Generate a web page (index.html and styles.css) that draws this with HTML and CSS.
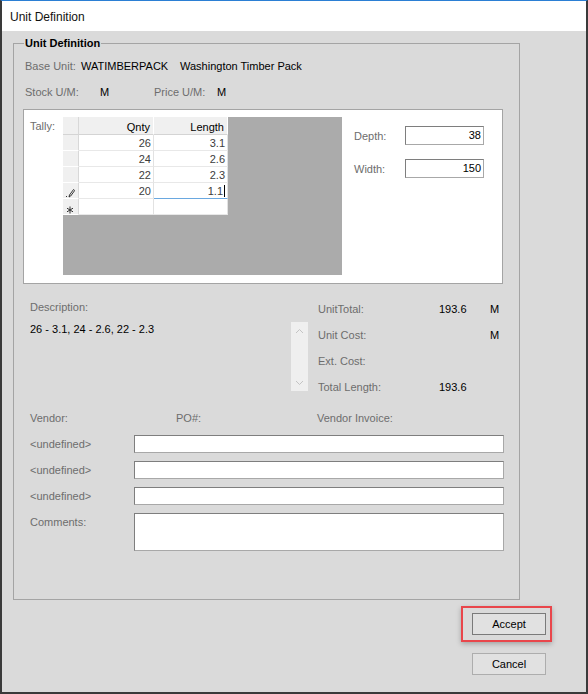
FILE: index.html
```html
<!DOCTYPE html>
<html lang="en">
<head>
    <meta charset="UTF-8">
    <title>Unit Definition</title>
    <link rel="stylesheet" href="styles.css">
</head>
<body>
    <div class="window">
        <div class="titlebar">Unit Definition</div>

        <div class="dialog">
            <!-- Group box -->
            <div class="group">
                <div class="legend">Unit Definition</div>

                <div class="info-row">
                    <span class="lbl w-base">Base Unit:</span>
                    <span class="val w-code">WATIMBERPACK</span>
                    <span class="val">Washington Timber Pack</span>
                </div>
                <div class="info-row stock-row">
                    <span class="lbl w-stock">Stock U/M:</span>
                    <span class="val w-m1">M</span>
                    <span class="lbl w-price">Price U/M:</span>
                    <span class="val">M</span>
                </div>

                <!-- Tally panel -->
                <div class="tally-panel">
                    <div class="lbl tally-label">Tally:</div>
                    <div class="grid-area">
                        <div class="tally-grid">
                            <div class="cell corner"></div>
                            <div class="cell head">Qnty</div>
                            <div class="cell head">Length</div>

                            <div class="cell rowhead"></div>
                            <div class="cell">26</div>
                            <div class="cell">3.1</div>

                            <div class="cell rowhead"></div>
                            <div class="cell">24</div>
                            <div class="cell">2.6</div>

                            <div class="cell rowhead"></div>
                            <div class="cell">22</div>
                            <div class="cell">2.3</div>

                            <div class="cell rowhead">
                                <svg width="9" height="10" viewBox="0 0 9 10">
                                    <rect x="0" y="8" width="1" height="1" fill="#333"/>
                                    <path d="M3 9 L3.5 7 L7.5 1.5 L8.7 2.5 L4.7 8 Z" fill="none" stroke="#222" stroke-width="0.9"/>
                                </svg>
                            </div>
                            <div class="cell">20</div>
                            <div class="cell editing"><span class="caret">1.1</span></div>

                            <div class="cell rowhead">
                                <svg width="8" height="8" viewBox="0 0 8 8">
                                    <path d="M4 0.5 V7.5 M1 2.2 L7 5.8 M1 5.8 L7 2.2" stroke="#333" stroke-width="1"/>
                                </svg>
                            </div>
                            <div class="cell"></div>
                            <div class="cell"></div>
                        </div>
                    </div>
                    <div class="dims">
                        <div class="dim-row">
                            <span class="lbl dim-label">Depth:</span>
                            <div class="textbox num">38</div>
                        </div>
                        <div class="dim-row">
                            <span class="lbl dim-label">Width:</span>
                            <div class="textbox num">150</div>
                        </div>
                    </div>
                </div>

                <!-- Description and totals -->
                <div class="summary">
                    <div class="desc">
                        <div class="lbl desc-label">Description:</div>
                        <div class="val desc-value">26 - 3.1, 24 - 2.6, 22 - 2.3</div>
                    </div>
                    <div class="scrollbar">
                        <svg width="9" height="6" viewBox="0 0 9 6"><path d="M1 5 L4.5 1.5 L8 5" fill="none" stroke="#c4c4c4" stroke-width="1"/></svg>
                        <svg width="9" height="6" viewBox="0 0 9 6"><path d="M1 1 L4.5 4.5 L8 1" fill="none" stroke="#c4c4c4" stroke-width="1"/></svg>
                    </div>
                    <div class="totals">
                        <span class="lbl">UnitTotal:</span><span class="val">193.6</span><span class="val">M</span>
                        <span class="lbl">Unit Cost:</span><span class="val"></span><span class="val">M</span>
                        <span class="lbl">Ext. Cost:</span><span class="val"></span><span class="val"></span>
                        <span class="lbl">Total Length:</span><span class="val">193.6</span><span class="val"></span>
                    </div>
                </div>

                <!-- Vendor -->
                <div class="vendor-head">
                    <span class="lbl w-vendor">Vendor:</span>
                    <span class="lbl w-po">PO#:</span>
                    <span class="lbl">Vendor Invoice:</span>
                </div>
                <div class="vendor-form">
                    <span class="lbl">&lt;undefined&gt;</span>
                    <div class="textbox"></div>
                    <span class="lbl">&lt;undefined&gt;</span>
                    <div class="textbox"></div>
                    <span class="lbl">&lt;undefined&gt;</span>
                    <div class="textbox"></div>
                    <span class="lbl">Comments:</span>
                    <div class="textbox"></div>
                </div>
            </div>

            <div class="actions">
                <div class="highlight">
                    <button class="btn btn-accept">Accept</button>
                </div>
                <button class="btn btn-cancel">Cancel</button>
            </div>
        </div>
    </div>
</body>
</html>
```

FILE: styles.css
```css
* {
    margin: 0;
    padding: 0;
    box-sizing: border-box;
}

body {
    font-family: 'Liberation Sans', Arial, sans-serif;
    font-size: 11px;
    color: #000;
    background: #dadada;
}

.window {
    width: 588px;
    height: 694px;
    background: #dadada;
    border: 2px solid #3a3a3a;
    border-top: 1px solid #2b7fd4;
}

.titlebar {
    height: 30px;
    background: #fff;
    font-size: 12px;
    line-height: 33px;
    padding-left: 8px;
    color: #111;
}

.dialog {
    padding-top: 12px;
}

.lbl {
    color: #6d6d6d;
}

.val {
    color: #000;
}

/* group box */
.group {
    margin-left: 11px;
    width: 507px;
    height: 557px;
    border: 1px solid #a4a4a4;
}

.legend {
    display: table;
    margin: -8px 0 0 10px;
    padding: 0 1px;
    background: #dadada;
    font-weight: bold;
    line-height: 14px;
}

.info-row {
    display: flex;
    line-height: 14px;
    padding-left: 11px;
    margin-top: 9px;
}

.stock-row {
    margin-top: 12px;
}

.w-base { width: 56px; }
.w-code { width: 99px; }
.w-stock { width: 75px; }
.w-m1 { width: 54px; }
.w-price { width: 63px; }

/* tally panel */
.tally-panel {
    display: flex;
    align-items: flex-start;
    margin: 10px 0 0 9px;
    width: 480px;
    height: 175px;
    background: #fff;
    border: 1px solid #a4a4a4;
    padding: 7px 0 0 6px;
}

.tally-label {
    width: 33px;
    line-height: 14px;
    margin-top: 2px;
}

.grid-area {
    width: 279px;
    height: 158px;
    background: #ababab;
}

.tally-grid {
    display: grid;
    grid-template-columns: 16px 75px 74px;
    grid-template-rows: 18px repeat(5, 16px);
    width: 165px;
    background: #fff;
}

.cell {
    text-align: right;
    padding-right: 2px;
    line-height: 16px;
    color: #3c3c3c;
    border-right: 1px solid #e2e2e2;
    border-bottom: 1px solid #e8e8e8;
}

.cell.head {
    background: #f0f0f0;
    color: #000;
    line-height: 20px;
    padding-right: 3px;
    border-right: 1px solid #fff;
    border-bottom: 1px solid #d4d4d4;
}

.cell.corner,
.cell.rowhead {
    background: #f0f0f0;
    border-right: 1px solid #d8d8d8;
    border-bottom: 1px solid #fff;
    text-align: left;
    padding: 3px 0 0 3px;
}

.cell.corner {
    border-bottom: 1px solid #d4d4d4;
}

.cell.editing {
    border-bottom: 1px solid #6aa8e0;
}

.caret {
    border-right: 1px solid #000;
    padding-right: 1px;
}

.dims {
    margin-left: 12px;
    padding-top: 9px;
    display: flex;
    flex-direction: column;
    gap: 14px;
}

.dim-row {
    display: flex;
    align-items: center;
}

.dim-label {
    width: 51px;
}

.textbox {
    background: #fff;
    border: 1px solid #7e7e7e;
    border-right-color: #a8a8a8;
    border-bottom-color: #a8a8a8;
}

.textbox.num {
    width: 79px;
    height: 19px;
    text-align: right;
    line-height: 17px;
    padding-right: 2px;
}

/* description / totals */
.summary {
    display: flex;
    margin-top: 12px;
    padding-left: 16px;
}

.desc {
    width: 261px;
}

.desc-label {
    line-height: 22px;
}

.desc-value {
    line-height: 22px;
}

.scrollbar {
    width: 17px;
    height: 69px;
    margin-top: 26px;
    background: #efefef;
    display: flex;
    flex-direction: column;
    justify-content: space-between;
    align-items: center;
    padding: 6px 0 5px;
}

.totals {
    display: grid;
    grid-template-columns: 121px 51px 20px;
    grid-auto-rows: 26px;
    line-height: 26px;
    margin-left: 10px;
}

/* vendor */
.vendor-head {
    display: flex;
    line-height: 18px;
    margin-top: 9px;
    padding-left: 16px;
}

.w-vendor { width: 146px; }
.w-po { width: 141px; }

.vendor-form {
    display: grid;
    grid-template-columns: 104px 370px;
    grid-template-rows: 18px 18px 18px 38px;
    row-gap: 8px;
    margin-top: 8px;
    padding-left: 16px;
    line-height: 18px;
}

/* buttons */
.actions {
    display: flex;
    flex-direction: column;
    align-items: flex-end;
    padding-right: 34px;
    margin-top: 6px;
}

.highlight {
    border: 2px solid #e9464b;
    padding: 5px 4px 5px 9px;
    box-shadow: 0 2px 5px rgba(0, 0, 0, 0.25);
}

.btn {
    width: 74px;
    height: 22px;
    background: #e1e1e1;
    border: 1px solid #adadad;
    font-family: 'Liberation Sans', Arial, sans-serif;
    font-size: 11px;
    color: #000;
}

.btn-accept {
    border-color: #7a7a7a;
}

.btn-cancel {
    margin-top: 11px;
    margin-right: 6px;
}
```
